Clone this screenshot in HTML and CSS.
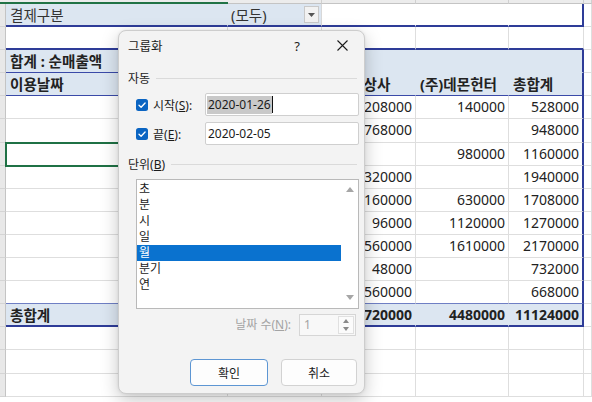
FILE: index.html
```html
<!DOCTYPE html>
<html lang="ko">
<head>
<meta charset="utf-8">
<title>그룹화</title>
<link rel="stylesheet" href="styles.css">
</head>
<body>
<div class="sheet">
  <div class="ch chs"></div><div class="ch chs"></div><div class="ch"></div><div class="ch"></div><div class="ch"></div><div class="ch"></div><div class="ch"></div>

  <div class="rh"></div><div class="c flt kr">결제구분</div><div class="c flt fb kr"><span>(모두)</span><span class="dd"><svg width="7" height="4" viewBox="0 0 7 4"><path d="M0 0h7L3.5 4z" fill="#555"/></svg></span></div><div class="c fw"></div><div class="c fw"></div><div class="c fw re"></div><div class="c"></div>

  <div class="rh"></div><div class="c top"></div><div class="c top"></div><div class="c top"></div><div class="c top"></div><div class="c top"></div><div class="c"></div>

  <div class="rh"></div><div class="c hd hl b kr">합계 : 순매출액</div><div class="c hd"></div><div class="c hd"></div><div class="c hd"></div><div class="c hd re"></div><div class="c"></div>

  <div class="rh"></div><div class="c hd hb b kr">이용날짜</div><div class="c hd hb"></div><div class="c hd hb b kr tight">(주)한 상사</div><div class="c hd hb b kr">(주)데몬헌터</div><div class="c hd hb b kr re">총합계</div><div class="c"></div>

  <div class="rh"></div><div class="c"></div><div class="c n">180000</div><div class="c n">208000</div><div class="c n">140000</div><div class="c n re">528000</div><div class="c"></div>
  <div class="rh"></div><div class="c"></div><div class="c n">180000</div><div class="c n">768000</div><div class="c n"></div><div class="c n re">948000</div><div class="c"></div>
  <div class="rh"></div><div class="c active"></div><div class="c n">180000</div><div class="c n"></div><div class="c n">980000</div><div class="c n re">1160000</div><div class="c"></div>
  <div class="rh"></div><div class="c"></div><div class="c n">1620000</div><div class="c n">320000</div><div class="c n"></div><div class="c n re">1940000</div><div class="c"></div>
  <div class="rh"></div><div class="c"></div><div class="c n">918000</div><div class="c n">160000</div><div class="c n">630000</div><div class="c n re">1708000</div><div class="c"></div>
  <div class="rh"></div><div class="c"></div><div class="c n">54000</div><div class="c n">96000</div><div class="c n">1120000</div><div class="c n re">1270000</div><div class="c"></div>
  <div class="rh"></div><div class="c"></div><div class="c n"></div><div class="c n">560000</div><div class="c n">1610000</div><div class="c n re">2170000</div><div class="c"></div>
  <div class="rh"></div><div class="c"></div><div class="c n">684000</div><div class="c n">48000</div><div class="c n"></div><div class="c n re">732000</div><div class="c"></div>
  <div class="rh"></div><div class="c pt"></div><div class="c pt n">108000</div><div class="c pt n">560000</div><div class="c pt n"></div><div class="c pt n re">668000</div><div class="c"></div>

  <div class="rh"></div><div class="c tot b kr">총합계</div><div class="c tot b n">3924000</div><div class="c tot b n">2720000</div><div class="c tot b n">4480000</div><div class="c tot b n re">11124000</div><div class="c"></div>

  <div class="rh"></div><div class="c"></div><div class="c"></div><div class="c"></div><div class="c"></div><div class="c"></div><div class="c"></div>
  <div class="rh"></div><div class="c"></div><div class="c"></div><div class="c"></div><div class="c"></div><div class="c"></div><div class="c"></div>
  <div class="rh"></div><div class="c"></div><div class="c"></div><div class="c"></div><div class="c"></div><div class="c"></div><div class="c"></div>
</div>

<div class="dialog">
  <div class="titlebar">
    <span class="title">그룹화</span>
    <span class="help">?</span>
    <span class="close"><svg width="11" height="11" viewBox="0 0 11 11"><path d="M0.5 0.5L10.5 10.5M10.5 0.5L0.5 10.5" stroke="#1b1b1b" stroke-width="1.1" fill="none"/></svg></span>
  </div>

  <div class="group"><span>자동</span><span class="rule"></span></div>

  <div class="field">
    <span class="check"><svg width="12" height="12" viewBox="0 0 12 12"><path d="M3 6.3L5.1 8.3L9.1 4" stroke="#fff" stroke-width="1.3" fill="none" stroke-linecap="round" stroke-linejoin="round"/></svg></span>
    <span class="flabel">시작(<u>S</u>):</span>
    <div class="input"><span class="sel">2020-01-26</span><span class="caret"></span></div>
  </div>
  <div class="field second">
    <span class="check"><svg width="12" height="12" viewBox="0 0 12 12"><path d="M3 6.3L5.1 8.3L9.1 4" stroke="#fff" stroke-width="1.3" fill="none" stroke-linecap="round" stroke-linejoin="round"/></svg></span>
    <span class="flabel">끝(<u>E</u>):</span>
    <div class="input"><span class="txt">2020-02-05</span></div>
  </div>

  <div class="group unit"><span>단위(<u>B</u>)</span><span class="rule"></span></div>

  <div class="listbox">
    <ul class="items">
      <li>초</li>
      <li>분</li>
      <li>시</li>
      <li>일</li>
      <li class="on">월</li>
      <li>분기</li>
      <li>연</li>
    </ul>
    <div class="scroll">
      <svg width="8" height="5" viewBox="0 0 8 5"><path d="M0 5h8L4 0z" fill="#a6a6a6"/></svg>
      <svg width="8" height="5" viewBox="0 0 8 5"><path d="M0 0h8L4 5z" fill="#a6a6a6"/></svg>
    </div>
  </div>

  <div class="days">
    <span class="dlabel">날짜 수(<u>N</u>):</span>
    <div class="spin">
      <span class="val">1</span>
      <div class="spinbtns">
        <span><svg width="6" height="4" viewBox="0 0 6 4"><path d="M0 4h6L3 0z" fill="#8a8a8a"/></svg></span>
        <span><svg width="6" height="4" viewBox="0 0 6 4"><path d="M0 0h6L3 4z" fill="#8a8a8a"/></svg></span>
      </div>
    </div>
  </div>

  <div class="buttons">
    <button class="btn primary">확인</button>
    <button class="btn">취소</button>
  </div>
</div>
</body>
</html>
```
FILE: styles.css
```css
html, body {
  margin: 0;
  padding: 0;
  background: #ffffff;
}
body {
  width: 592px;
  height: 402px;
  overflow: hidden;
  position: relative;
  font-family: "Noto Sans", "Noto Sans CJK KR", sans-serif;
}

/* ---------- spreadsheet ---------- */
.sheet {
  display: grid;
  grid-template-columns: 6px 222px 94px 94px 93px 75px 8px;
  grid-template-rows: 4px repeat(17, 23.1px);
  font-size: 14px;
  color: #222;
}
.ch {
  background: #ececec;
  border-right: 1px solid #d0d0d0;
  border-bottom: 1px solid #c4c4c4;
  box-sizing: border-box;
}
.chs {
  border-bottom: 2px solid #217346;
  border-right: none;
}
.rh {
  background: #e8e8e8;
  border-right: 1px solid #c4c4c4;
  border-bottom: 1px solid #d4d4d4;
  box-sizing: border-box;
}
.c {
  box-sizing: border-box;
  border-right: 1px solid #dedede;
  border-bottom: 1px solid #dedede;
  padding: 0 3px 0 4px;
  line-height: 22px;
  white-space: nowrap;
  overflow: hidden;
}
.kr { font-size: 14.6px; }
.tight { padding-left: 1px; }
.n { text-align: right; }
.b { font-weight: 700; }

.flt {
  background: #dce6f1;
  border-right-color: #dce6f1;
  border-bottom: 2px solid #2e3c98;
  color: #333;
}
.fb {
  display: flex;
  align-items: center;
  padding-right: 2px;
  padding-left: 3px;
  border-right-color: #d8d8d8;
}
.dd {
  margin-left: auto;
  width: 15px;
  height: 17px;
  box-sizing: border-box;
  border: 1px solid #c9c9c9;
  background: #f2f2f2;
  display: flex;
  align-items: center;
  justify-content: center;
}
.fw {
  border-right-color: #ffffff;
  border-bottom: 2px solid #2e3c98;
}
.top { border-bottom: 2px solid #2e3c98; }
.hd {
  background: #dce6f1;
  border-right-color: #dce6f1;
  border-bottom-color: #dce6f1;
}
.hl { border-bottom: 1px solid #3a4aa8; }
.hb { border-bottom: 1px solid #3a4aa8; }
.pt { border-bottom: 1px solid #6f7fc4; }
.tot {
  background: #dce6f1;
  border-right-color: #dce6f1;
  border-bottom: 2px solid #2e3c98;
}
.re { border-right: 2px solid #2e3c98; }
.active {
  outline: 2px solid #1f7145;
  outline-offset: -1px;
  position: relative;
  z-index: 1;
}

/* ---------- dialog ---------- */
.dialog {
  position: absolute;
  left: 118px;
  top: 30px;
  width: 247px;
  height: 364px;
  box-sizing: border-box;
  background: #f3f3f3;
  border: 1px solid #cdcdcd;
  border-radius: 8px;
  box-shadow: 0 6px 18px rgba(0, 0, 0, 0.22), 0 0 3px rgba(0, 0, 0, 0.08);
  display: flex;
  flex-direction: column;
  font-family: "Noto Sans", "Noto Sans CJK KR", sans-serif;
  font-size: 12px;
  color: #1b1b1b;
  z-index: 5;
}
.titlebar {
  height: 29px;
  display: flex;
  align-items: center;
  padding-left: 9px;
}
.title {
  flex: 1;
  font-size: 12.5px;
}
.help {
  width: 46px;
  text-align: center;
  font-size: 13px;
}
.close {
  width: 44px;
  display: flex;
  justify-content: center;
  align-items: center;
}
.group {
  display: flex;
  align-items: center;
  height: 20px;
  margin: 8px 7px 0 9px;
  gap: 6px;
}
.group.unit { margin-top: 9px; }
.rule {
  flex: 1;
  border-top: 1px solid #dadada;
}
.field {
  display: flex;
  align-items: center;
  height: 23px;
  margin: 5px 5px 0 17px;
}
.field.second { margin-top: 6px; }
.check {
  width: 12px;
  height: 12px;
  border-radius: 2.5px;
  background: #0a64c2;
  display: flex;
  margin-right: 5px;
}
.flabel {
  width: 52px;
}
.input {
  flex: 1;
  height: 23px;
  box-sizing: border-box;
  background: #ffffff;
  border: 1px solid #cfcfcf;
  border-radius: 2px;
  display: flex;
  align-items: center;
  padding-left: 1px;
}
.sel {
  background: #c9c9c9;
  line-height: 18px;
  padding: 0 1px;
}
.caret {
  width: 1px;
  height: 17px;
  background: #111;
}
.txt {
  padding-left: 1px;
}
.listbox {
  margin: 5px 5px 0 17px;
  height: 130px;
  box-sizing: border-box;
  background: #ffffff;
  border: 1px solid #b9b9b9;
  display: flex;
}
.items {
  list-style: none;
  margin: 0;
  padding: 1px 0 0 0;
  flex: 1;
}
.items li {
  height: 16px;
  line-height: 16px;
  padding-left: 2px;
}
.items li.on {
  background: #0a72cf;
  color: #ffffff;
}
.scroll {
  width: 17px;
  display: flex;
  flex-direction: column;
  justify-content: space-between;
  align-items: center;
  padding: 7px 0 8px;
}
.days {
  display: flex;
  align-items: center;
  justify-content: flex-end;
  height: 22px;
  margin: 5px 8px 0 0;
}
.dlabel {
  color: #a3a3a3;
  margin-right: 8px;
  line-height: 16px;
}
.spin {
  width: 57px;
  height: 22px;
  box-sizing: border-box;
  border: 1px solid #d6d6d6;
  background: #f8f8f8;
  display: flex;
}
.val {
  flex: 1;
  color: #a3a3a3;
  padding-left: 4px;
  line-height: 20px;
}
.spinbtns {
  width: 14px;
  margin: 1px 1px 1px 0;
  display: flex;
  flex-direction: column;
  border: 1px solid #e0e0e0;
  background: #fbfbfb;
}
.spinbtns span {
  flex: 1;
  display: flex;
  align-items: center;
  justify-content: center;
}
.buttons {
  display: flex;
  justify-content: flex-end;
  gap: 13px;
  margin: 23px 7px 0 0;
}
.btn {
  height: 27px;
  width: 76px;
  box-sizing: border-box;
  border-radius: 4px;
  border: 1px solid #d2d2d2;
  background: #fdfdfd;
  font-family: inherit;
  font-size: 12px;
  color: #1b1b1b;
  padding: 0;
}
.btn.primary {
  width: 78px;
  border-color: #5d96d3;
}
```
